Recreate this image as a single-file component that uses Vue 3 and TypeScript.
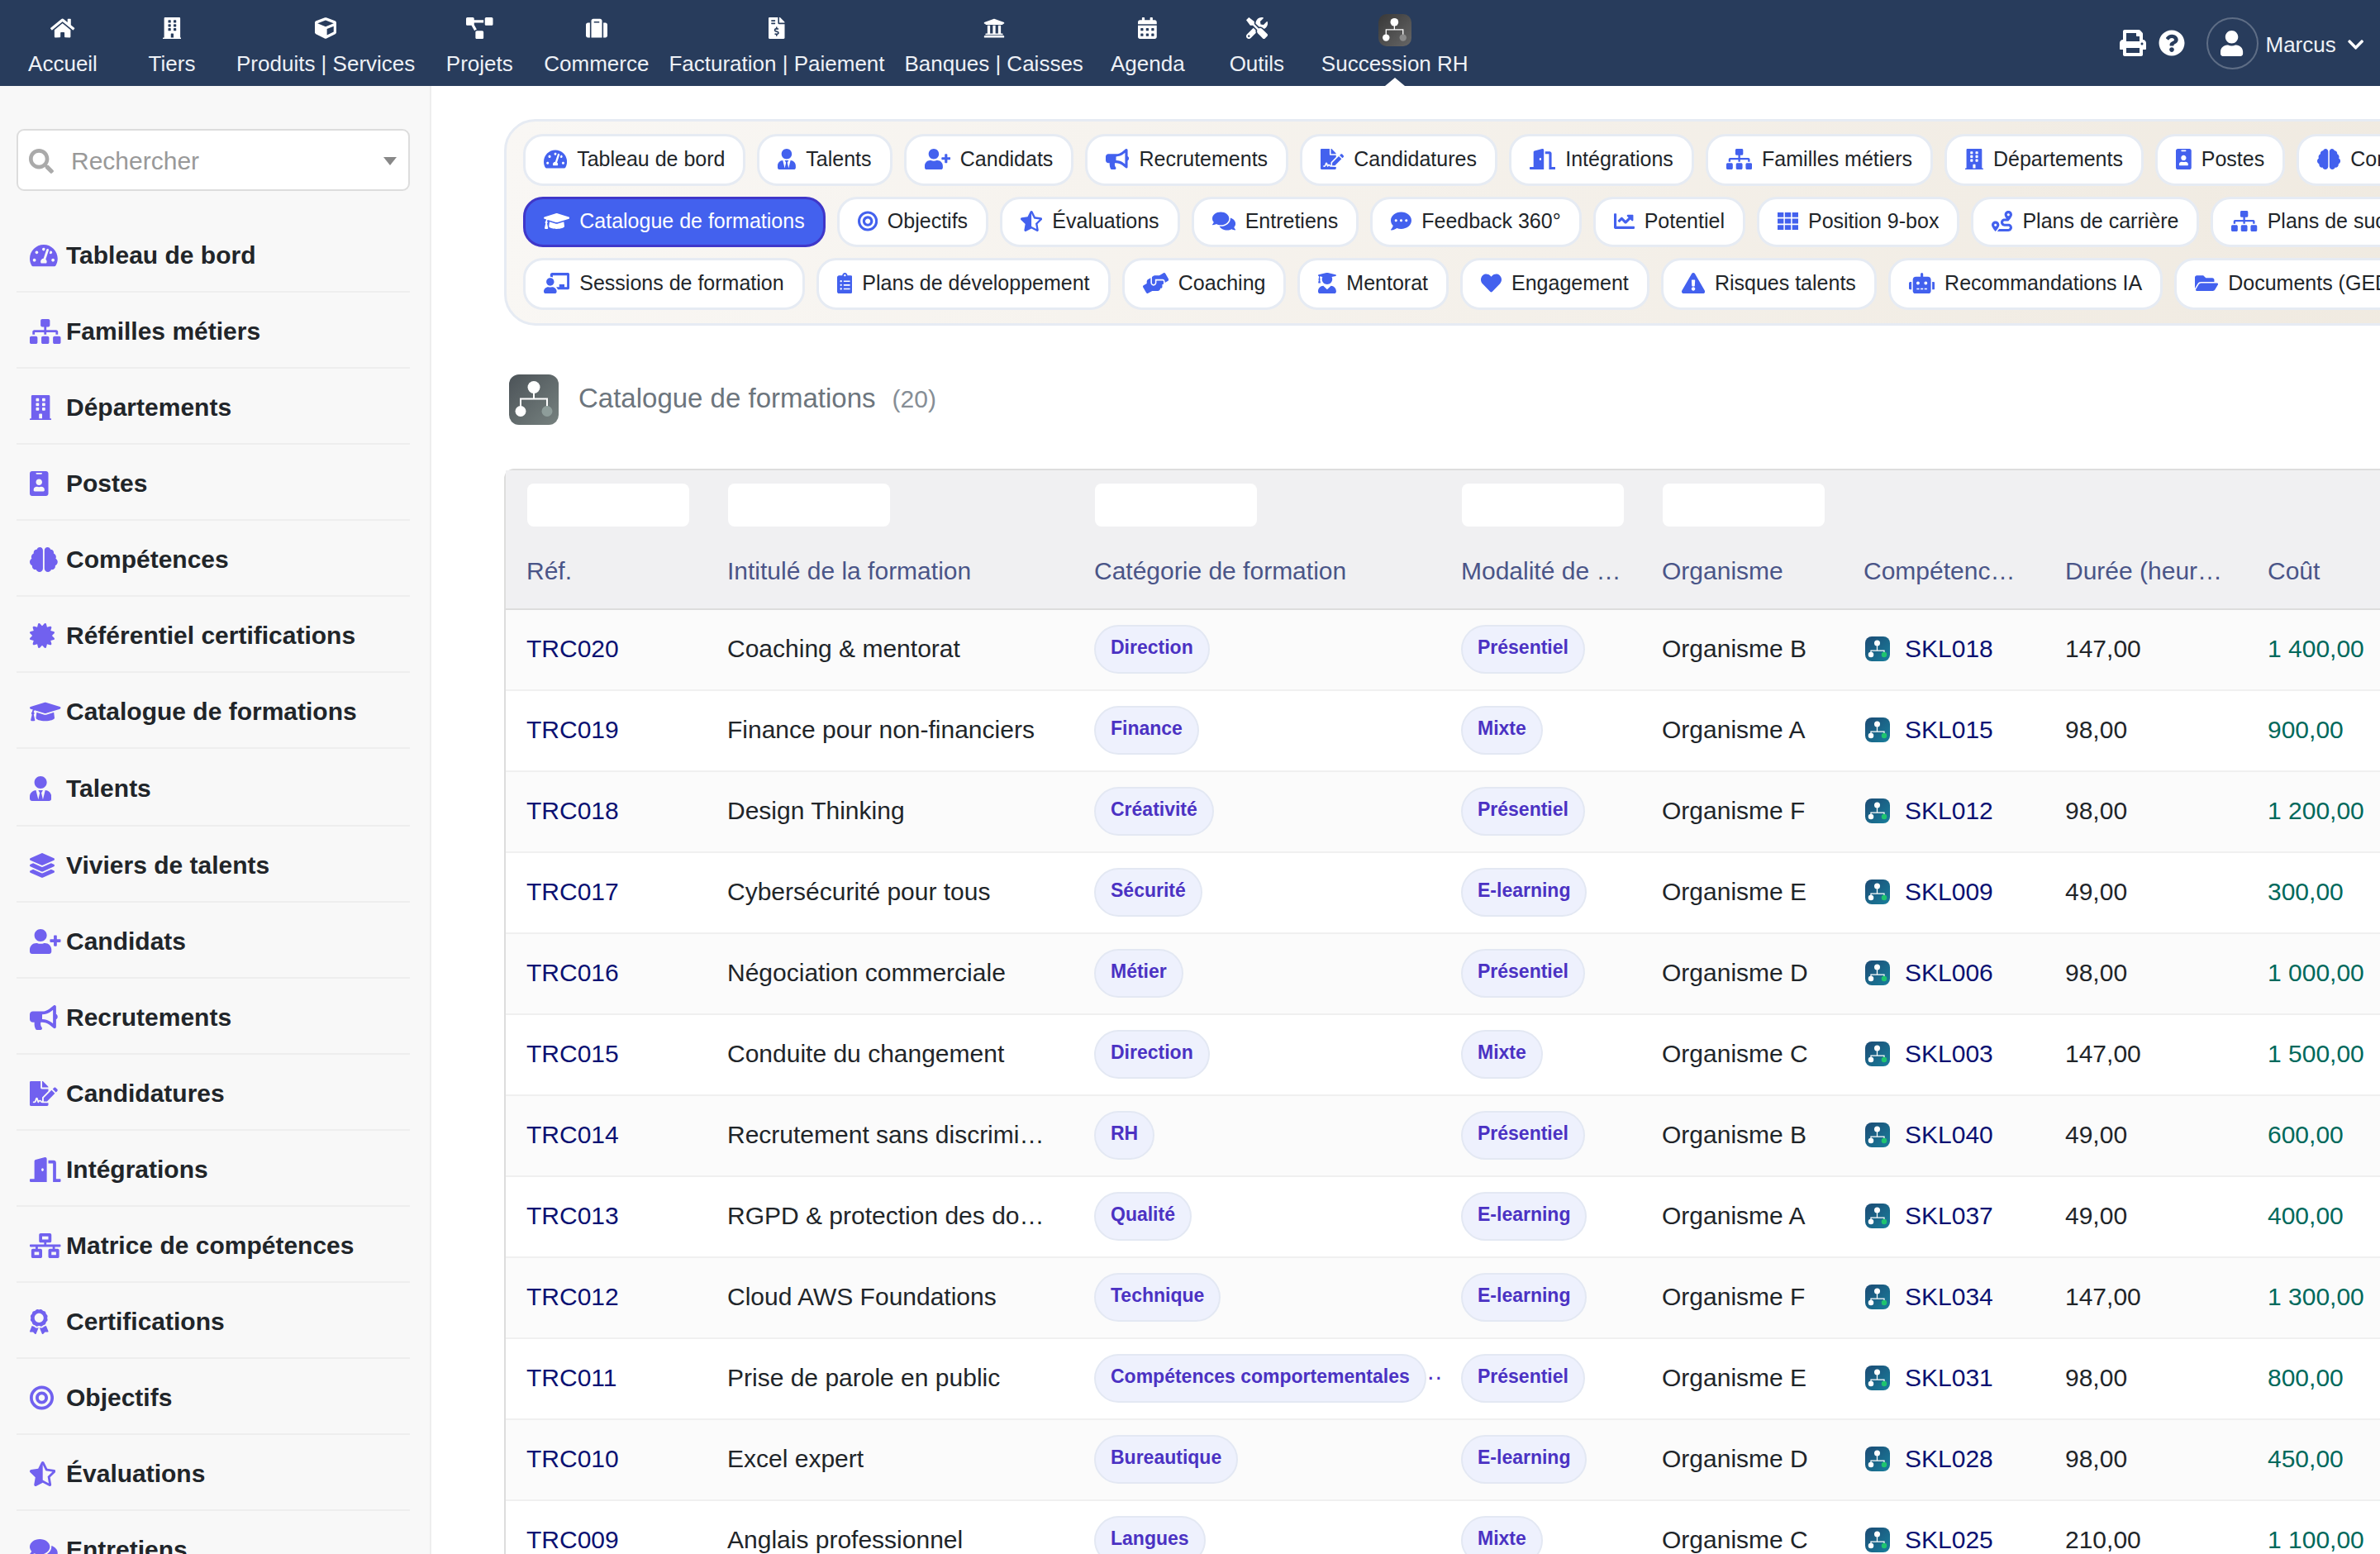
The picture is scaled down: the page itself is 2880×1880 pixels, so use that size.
<template>
  <div class="app">
    <header class="topbar">
      <nav class="nav">
        <div v-for="item in navItems" :key="item.label" class="nav-item">
          <Ico :name="item.icon" class="nav-ico" />
          <span class="nav-label">{{ item.label }}</span>
        </div>
        <div class="nav-item nav-active">
          <span class="logo logo-nav">
            <svg viewBox="0 0 60 60" class="tree">
              <circle cx="29" cy="15" r="7.5" fill="#fff" />
              <path d="M29 20v9M13.5 40V29H45v11" fill="none" stroke="#fff" stroke-width="2" />
              <circle cx="13.5" cy="44" r="6.5" fill="#fff" />
              <circle cx="45" cy="44" r="6.5" fill="#8a8a8a" />
            </svg>
          </span>
          <span class="nav-label nav-label-logo">Succession RH</span>
        </div>
      </nav>
      <div class="nav-right">
        <Ico name="print" class="tool-ico" />
        <Ico name="question" class="tool-ico" />
        <span class="avatar"><Ico name="user" class="avatar-ico" /></span>
        <span class="user-name">Marcus</span>
        <Ico name="chevron" class="chevron" />
      </div>
    </header>

    <div class="body">
      <aside class="sidebar">
        <div class="search">
          <Ico name="search" class="search-ico" />
          <span class="search-text">Rechercher</span>
          <span class="search-arrow"></span>
        </div>
        <ul class="side-list">
          <li v-for="item in sideItems" :key="item.label" class="side-item">
            <span class="side-ico"><Ico :name="item.icon" /></span>
            <span>{{ item.label }}</span>
          </li>
        </ul>
      </aside>

      <main class="main">
        <section class="tabs">
          <div v-for="(row, i) in tabRows" :key="i" class="tab-row">
            <div v-for="tab in row" :key="tab.label" class="tab" :class="{ active: tab.active }">
              <Ico :name="tab.icon" class="tab-ico" />
              <span>{{ tab.label }}</span>
            </div>
          </div>
        </section>

        <div class="page-title">
          <span class="logo logo-title">
            <svg viewBox="0 0 60 60" class="tree">
              <circle cx="30" cy="15" r="7.5" fill="#fff" />
              <path d="M30 20v9M14 40V29h32v11" fill="none" stroke="#fff" stroke-width="2" />
              <circle cx="14" cy="44" r="6.5" fill="#fff" />
              <circle cx="46" cy="44" r="6.5" fill="#8e9d9a" />
            </svg>
          </span>
          <span class="title-text">Catalogue de formations</span>
          <span class="title-count">(20)</span>
        </div>

        <section class="table">
          <div class="thead">
            <div class="grid filters">
              <div v-for="n in 5" :key="n" class="cell"><span class="filter"></span></div>
            </div>
            <div class="grid labels">
              <div v-for="col in columns" :key="col" class="cell">{{ col }}</div>
            </div>
          </div>
          <div v-for="row in rows" :key="row.ref" class="grid row">
            <div class="cell ref">{{ row.ref }}</div>
            <div class="cell">{{ row.title }}</div>
            <div class="cell">
              <span class="badge">{{ row.cat }}</span><span v-if="row.cat.length > 20" class="more">··</span>
            </div>
            <div class="cell"><span class="badge">{{ row.mode }}</span></div>
            <div class="cell">{{ row.org }}</div>
            <div class="cell skill">
              <span class="logo logo-skill">
                <svg viewBox="0 0 60 60" class="tree">
                  <circle cx="29" cy="16" r="7" fill="#fff" />
                  <path d="M29 20v14M14 42V34h32v8" fill="none" stroke="#fff" stroke-width="2.5" />
                  <circle cx="14" cy="44" r="6.5" fill="#fff" />
                  <circle cx="46" cy="44" r="6.5" fill="#1fc46f" />
                </svg>
              </span>
              <span class="ref">{{ row.skill }}</span>
            </div>
            <div class="cell">{{ row.hours }}</div>
            <div class="cell cost">{{ row.cost }}</div>
          </div>
        </section>
      </main>
    </div>
  </div>
</template>

<script setup lang="ts">
import { h } from 'vue'

const icons: Record<string, [number, string]> = {
  home: [576, 'M280.37 148.26L96 300.11V464a16 16 0 0 0 16 16l112.06-.29a16 16 0 0 0 15.92-16V368a16 16 0 0 1 16-16h64a16 16 0 0 1 16 16v95.64a16 16 0 0 0 16 16.05L464 480a16 16 0 0 0 16-16V300L295.67 148.26a12.19 12.19 0 0 0-15.3 0zM571.6 251.47L488 182.56V44.05a12 12 0 0 0-12-12h-56a12 12 0 0 0-12 12v72.61L318.47 43a48 48 0 0 0-61 0L4.34 251.47a12 12 0 0 0-1.6 16.9l25.5 31A12 12 0 0 0 45.15 301l235.22-193.74a12.19 12.19 0 0 1 15.3 0L530.9 301a12 12 0 0 0 16.9-1.6l25.5-31a12 12 0 0 0-1.7-16.93z'],
  user: [448, 'M224 256c70.7 0 128-57.3 128-128S294.7 0 224 0 96 57.3 96 128s57.3 128 128 128zm89.6 32h-16.7c-22.2 10.2-46.9 16-72.9 16s-50.6-5.8-72.9-16h-16.7C60.2 288 0 348.2 0 422.4V464c0 26.5 21.5 48 48 48h352c26.5 0 48-21.5 48-48v-41.6c0-74.2-60.2-134.4-134.4-134.4z'],
  building: [448, 'M436 480h-20V24c0-13.255-10.745-24-24-24H56C42.745 0 32 10.745 32 24v456H12c-6.627 0-12 5.373-12 12v20h448v-20c0-6.627-5.373-12-12-12zM128 76c0-6.627 5.373-12 12-12h40c6.627 0 12 5.373 12 12v40c0 6.627-5.373 12-12 12h-40c-6.627 0-12-5.373-12-12V76zm0 96c0-6.627 5.373-12 12-12h40c6.627 0 12 5.373 12 12v40c0 6.627-5.373 12-12 12h-40c-6.627 0-12-5.373-12-12v-40zm52 148h-40c-6.627 0-12-5.373-12-12v-40c0-6.627 5.373-12 12-12h40c6.627 0 12 5.373 12 12v40c0 6.627-5.373 12-12 12zm76 160h-64v-84c0-6.627 5.373-12 12-12h40c6.627 0 12 5.373 12 12v84zm64-172c0 6.627-5.373 12-12 12h-40c-6.627 0-12-5.373-12-12v-40c0-6.627 5.373-12 12-12h40c6.627 0 12 5.373 12 12v40zm0-96c0 6.627-5.373 12-12 12h-40c-6.627 0-12-5.373-12-12v-40c0-6.627 5.373-12 12-12h40c6.627 0 12 5.373 12 12v40zm0-96c0 6.627-5.373 12-12 12h-40c-6.627 0-12-5.373-12-12V76c0-6.627 5.373-12 12-12h40c6.627 0 12 5.373 12 12v40z'],
  cube: [512, 'M239.1 6.3l-208 78c-18.7 7-31.1 25-31.1 45v225.1c0 18.2 10.3 34.8 26.5 42.9l208 104c13.5 6.8 29.4 6.8 42.9 0l208-104c16.3-8.1 26.5-24.8 26.5-42.9V129.3c0-20-12.4-37.9-31.1-44.9l-208-78C262 2.2 250 2.2 239.1 6.3zM256 68.4l192 72v1.1l-192 78-192-78v-1.1l192-72zm32 356V275.5l160-65v133.9l-160 80z'],
  diagram: [640, 'M384 320H256c-17.67 0-32 14.33-32 32v128c0 17.67 14.33 32 32 32h128c17.67 0 32-14.33 32-32V352c0-17.67-14.33-32-32-32zM192 32c0-17.67-14.33-32-32-32H32C14.33 0 0 14.33 0 32v128c0 17.67 14.33 32 32 32h95.72l73.16 128.04C211.98 300.98 232.4 288 256 288h.28L192 175.51V128h224V64H192V32zM608 0H480c-17.67 0-32 14.33-32 32v128c0 17.67 14.33 32 32 32h128c17.67 0 32-14.33 32-32V32c0-17.67-14.33-32-32-32z'],
  suitcase: [512, 'M128 480h256V80c0-26.5-21.5-48-48-48H176c-26.5 0-48 21.5-48 48v400zm64-384h128v32H192V96zm320 80v256c0 26.5-21.5 48-48 48h-48V128h48c26.5 0 48 21.5 48 48zM96 480H48c-26.5 0-48-21.5-48-48V176c0-26.5 21.5-48 48-48h48v352z'],
  invoice: [384, 'M377 105L279.1 7c-4.5-4.5-10.6-7-17-7H256v128h128v-6.1c0-6.3-2.5-12.4-7-16.9zm-153 31V0H24C10.7 0 0 10.7 0 24v464c0 13.3 10.7 24 24 24h336c13.3 0 24-10.7 24-24V160H248c-13.2 0-24-10.8-24-24zM64 72c0-4.42 3.58-8 8-8h80c4.42 0 8 3.58 8 8v16c0 4.42-3.58 8-8 8H72c-4.42 0-8-3.58-8-8V72zm0 80v-16c0-4.42 3.58-8 8-8h80c4.42 0 8 3.58 8 8v16c0 4.42-3.58 8-8 8H72c-4.42 0-8-3.58-8-8zm144 263.88V440c0 4.42-3.58 8-8 8h-16c-4.42 0-8-3.58-8-8v-24.29c-11.29-.58-22.27-4.52-31.37-11.35-3.9-2.93-4.1-8.77-.57-12.14l11.75-11.21c2.77-2.64 6.89-2.76 10.13-.73 3.87 2.42 8.26 3.72 12.82 3.72h28.11c6.5 0 11.8-5.92 11.8-13.19 0-5.95-3.61-11.19-8.77-12.73l-45-13.5c-18.59-5.58-31.58-23.42-31.58-43.39 0-24.52 19.05-44.44 42.67-45.07V232c0-4.42 3.58-8 8-8h16c4.42 0 8 3.58 8 8v24.29c11.29.58 22.27 4.51 31.37 11.35 3.9 2.93 4.1 8.77.57 12.14l-11.75 11.21c-2.77 2.64-6.89 2.76-10.13.73-3.87-2.43-8.26-3.72-12.82-3.72h-28.11c-6.5 0-11.8 5.92-11.8 13.19 0 5.95 3.61 11.19 8.77 12.73l45 13.5c18.59 5.58 31.58 23.42 31.58 43.39 0 24.53-19.05 44.44-42.67 45.07z'],
  university: [512, 'M496 128v16a8 8 0 0 1-8 8h-24v12c0 6.627-5.373 12-12 12H60c-6.627 0-12-5.373-12-12v-12H24a8 8 0 0 1-8-8v-16a8 8 0 0 1 4.941-7.392l232-88a7.996 7.996 0 0 1 6.118 0l232 88A8 8 0 0 1 496 128zm-24 304H40c-13.255 0-24 10.745-24 24v16a8 8 0 0 0 8 8h464a8 8 0 0 0 8-8v-16c0-13.255-10.745-24-24-24zM96 192v192H60c-6.627 0-12 5.373-12 12v20h416v-20c0-6.627-5.373-12-12-12h-36V192h-64v192h-64V192h-64v192h-64V192H96z'],
  calendar: [448, 'M0 464c0 26.5 21.5 48 48 48h352c26.5 0 48-21.5 48-48V192H0v272zm320-196c0-6.6 5.4-12 12-12h40c6.6 0 12 5.4 12 12v40c0 6.6-5.4 12-12 12h-40c-6.6 0-12-5.4-12-12v-40zm0 128c0-6.6 5.4-12 12-12h40c6.6 0 12 5.4 12 12v40c0 6.6-5.4 12-12 12h-40c-6.6 0-12-5.4-12-12v-40zM192 268c0-6.6 5.4-12 12-12h40c6.6 0 12 5.4 12 12v40c0 6.6-5.4 12-12 12h-40c-6.6 0-12-5.4-12-12v-40zm0 128c0-6.6 5.4-12 12-12h40c6.6 0 12 5.4 12 12v40c0 6.6-5.4 12-12 12h-40c-6.6 0-12-5.4-12-12v-40zM64 268c0-6.6 5.4-12 12-12h40c6.6 0 12 5.4 12 12v40c0 6.6-5.4 12-12 12H76c-6.6 0-12-5.4-12-12v-40zm0 128c0-6.6 5.4-12 12-12h40c6.6 0 12 5.4 12 12v40c0 6.6-5.4 12-12 12H76c-6.6 0-12-5.4-12-12v-40zM400 64h-48V16c0-8.8-7.2-16-16-16h-32c-8.8 0-16 7.2-16 16v48H160V16c0-8.8-7.2-16-16-16h-32c-8.8 0-16 7.2-16 16v48H48C21.5 64 0 85.5 0 112v48h448v-48c0-26.5-21.5-48-48-48z'],
  tools: [512, 'M501.1 395.7L384 278.6c-23.1-23.1-57.6-27.6-85.4-13.9L192 158.1V96L64 0 0 64l96 128h62.1l106.6 106.6c-13.6 27.8-9.2 62.3 13.9 85.4l117.1 117.1c14.6 14.6 38.2 14.6 52.7 0l52.7-52.7c14.5-14.6 14.5-38.2 0-52.7zM331.7 225c28.3 0 54.9 11 74.9 31l19.4 19.4c15.8-6.9 30.8-16.5 43.8-29.5 37.1-37.1 49.7-89.3 37.9-136.7-2.2-9-13.5-12.1-20.1-5.5l-74.4 74.4-67.9-11.3L334 98.9l74.4-74.4c6.6-6.6 3.4-17.9-5.7-20.2-47.4-11.7-99.6.9-136.6 37.9-28.5 28.5-41.9 66.1-41.2 103.6l82.1 82.1c8.1-1.9 16.5-2.9 24.7-2.9zm-103.9 82l-56.7-56.7L18.7 402.8c-25 25-25 65.5 0 90.5s65.5 25 90.5 0l123.6-123.6c-7.6-19.9-9.9-41.6-5-62.7zM64 472c-13.2 0-24-10.8-24-24 0-13.3 10.7-24 24-24s24 10.7 24 24c0 13.2-10.7 24-24 24z'],
  print: [512, 'M448 192V77.25c0-8.49-3.37-16.62-9.37-22.63L393.37 9.37c-6-6-14.14-9.37-22.63-9.37H96C78.33 0 64 14.33 64 32v160c-35.35 0-64 28.65-64 64v112c0 8.84 7.16 16 16 16h48v96c0 17.67 14.33 32 32 32h320c17.67 0 32-14.33 32-32v-96h48c8.84 0 16-7.16 16-16V256c0-35.35-28.65-64-64-64zm-64 256H128v-96h256v96zm0-224H128V64h192v48c0 8.84 7.16 16 16 16h48v96zm48 72c-13.25 0-24-10.75-24-24 0-13.26 10.75-24 24-24s24 10.74 24 24c0 13.25-10.75 24-24 24z'],
  question: [512, 'M504 256c0 136.997-111.043 248-248 248S8 392.997 8 256C8 119.083 119.043 8 256 8s248 111.083 248 248zM262.655 90c-54.497 0-89.255 22.957-116.549 63.758-3.536 5.286-2.353 12.415 2.715 16.258l34.699 26.31c5.205 3.947 12.621 3.008 16.665-2.122 17.864-22.658 30.113-35.797 57.303-35.797 20.429 0 45.698 13.148 45.698 32.958 0 14.976-12.363 22.667-32.534 33.976C247.128 238.528 216 254.941 216 296v4c0 6.627 5.373 12 12 12h56c6.627 0 12-5.373 12-12v-1.333c0-28.462 83.186-29.647 83.186-106.667 0-58.002-60.165-102-116.531-102zM256 338c-25.365 0-46 20.635-46 46 0 25.364 20.635 46 46 46s46-20.636 46-46c0-25.365-20.635-46-46-46z'],
  chevron: [448, 'M207.029 381.476L12.686 187.132c-9.373-9.373-9.373-24.569 0-33.941l22.667-22.667c9.357-9.357 24.522-9.375 33.901-.04L224 284.505l154.745-154.021c9.379-9.335 24.544-9.317 33.901.04l22.667 22.667c9.373 9.373 9.373 24.569 0 33.941L240.971 381.476c-9.373 9.372-24.569 9.372-33.942 0z'],
  search: [512, 'M505 442.7L405.3 343c-4.5-4.5-10.6-7-17-7H372c27.6-35.3 44-79.7 44-128C416 93.1 322.9 0 208 0S0 93.1 0 208s93.1 208 208 208c48.3 0 92.7-16.4 128-44v16.3c0 6.4 2.5 12.5 7 17l99.7 99.7c9.4 9.4 24.6 9.4 33.9 0l28.3-28.3c9.4-9.4 9.4-24.6.1-34zM208 336c-70.7 0-128-57.2-128-128 0-70.7 57.2-128 128-128 70.7 0 128 57.2 128 128 0 70.7-57.2 128-128 128z'],
  gauge: [576, 'M288 32C128.94 32 0 160.94 0 320c0 52.8 14.25 102.26 39.06 144.8 5.61 9.62 16.3 15.2 27.44 15.2h443c11.14 0 21.83-5.58 27.44-15.2C561.75 422.26 576 372.8 576 320c0-159.06-128.94-288-288-288zm0 64c14.71 0 26.58 10.13 30.32 23.65-1.11 2.26-2.64 4.23-3.45 6.67l-9.22 27.67c-5.13 3.49-10.97 6.01-17.64 6.01-17.67 0-32-14.33-32-32S270.33 96 288 96zM96 384c-17.67 0-32-14.33-32-32s14.33-32 32-32 32 14.33 32 32-14.33 32-32 32zm48-160c-17.67 0-32-14.33-32-32s14.33-32 32-32 32 14.33 32 32-14.33 32-32 32zm246.77-72.41l-61.33 184C343.13 347.33 352 364.54 352 384c0 11.72-3.38 22.55-8.88 32H232.88c-5.5-9.45-8.88-20.28-8.88-32 0-33.94 26.5-61.43 59.9-63.59l61.34-184.01c4.17-12.56 17.73-19.45 30.36-15.17 12.57 4.19 19.35 17.79 15.17 30.36zm14.66 57.2l15.52-46.55c3.47-1.29 7.13-2.23 11.05-2.23 17.67 0 32 14.33 32 32s-14.33 32-32 32c-11.38-.01-21-6.28-26.57-15.22zM480 384c-17.67 0-32-14.33-32-32s14.33-32 32-32 32 14.33 32 32-14.33 32-32 32z'],
  userTie: [448, 'M224 256c70.7 0 128-57.3 128-128S294.7 0 224 0 96 57.3 96 128s57.3 128 128 128zm95.8 32.6L272 480l-32-136 32-56h-96l32 56-32 136-47.8-191.4C56.9 292 0 350.3 0 422.4V464c0 26.5 21.5 48 48 48h352c26.5 0 48-21.5 48-48v-41.6c0-72.1-56.9-130.4-128.2-133.8z'],
  userPlus: [640, 'M624 208h-64v-64c0-8.8-7.2-16-16-16h-32c-8.8 0-16 7.2-16 16v64h-64c-8.8 0-16 7.2-16 16v32c0 8.8 7.2 16 16 16h64v64c0 8.8 7.2 16 16 16h32c8.8 0 16-7.2 16-16v-64h64c8.8 0 16-7.2 16-16v-32c0-8.8-7.2-16-16-16zm-400 48c70.7 0 128-57.3 128-128S294.7 0 224 0 96 57.3 96 128s57.3 128 128 128zm89.6 32h-16.7c-22.2 10.2-46.9 16-72.9 16s-50.6-5.8-72.9-16h-16.7C60.2 288 0 348.2 0 422.4V464c0 26.5 21.5 48 48 48h352c26.5 0 48-21.5 48-48v-41.6c0-74.2-60.2-134.4-134.4-134.4z'],
  bullhorn: [576, 'M576 240c0-23.63-12.95-44.04-32-55.12V32.01C544 23.26 537.02 0 512 0c-7.12 0-14.19 2.38-19.98 7.02l-85.03 68.03C364.28 109.19 310.66 128 256 128H64c-35.35 0-64 28.65-64 64v96c0 35.35 28.65 64 64 64h33.7c-1.39 10.48-2.18 21.14-2.18 32 0 39.77 9.26 77.35 25.56 110.94 5.19 10.69 16.52 17.06 28.4 17.06h74.28c26.05 0 41.69-29.84 25.9-50.56-16.4-21.52-26.15-48.36-26.15-77.44 0-11.11 1.62-21.79 4.41-32H256c54.66 0 108.28 18.81 150.98 52.95l85.03 68.03a32.023 32.023 0 0 0 19.98 7.02c24.92 0 32-22.78 32-32V295.13C563.05 284.04 576 263.63 576 240zm-96 141.42l-33.05-26.44C392.95 311.78 325.12 288 256 288v-96c69.12 0 136.95-23.78 190.95-66.98L480 98.58v282.84z'],
  signature: [576, 'M218.17 424.14c-2.95-5.92-8.09-6.52-10.17-6.52s-7.22.59-10.02 6.19l-7.67 15.34c-6.37 12.78-25.03 11.37-29.48-2.09L144 386.59l-10.61 31.88c-5.89 17.66-22.38 29.53-41 29.53H80c-8.84 0-16-7.16-16-16s7.16-16 16-16h12.39c4.83 0 9.11-3.08 10.64-7.66l18.19-54.64c3.3-9.81 12.44-16.41 22.78-16.41s19.48 6.59 22.77 16.41l13.88 41.64c19.75-16.19 54.06-9.7 66 14.16 1.89 3.78 5.49 5.95 9.36 6.26v-82.12l128-127.09V160H248c-13.2 0-24-10.8-24-24V0H24C10.7 0 0 10.7 0 24v464c0 13.3 10.7 24 24 24h336c13.3 0 24-10.7 24-24v-40l-128-.25c-16.12-.03-30.72-9.02-37.83-23.61zM384 121.9c0-6.3-2.5-12.4-7-16.9L279.1 7c-4.5-4.5-10.6-7-17-7H256v128h128v-6.1zm-96 225.06V416h68.99l161.68-162.78-67.88-67.88L288 346.96zm280.54-179.63l-31.87-31.87c-9.94-9.94-26.07-9.94-36.01 0l-27.25 27.25 67.88 67.88 27.25-27.25c9.95-9.94 9.95-26.07 0-36.01z'],
  door: [640, 'M624 448h-80V113.45C544 86.19 522.47 64 496 64H384v64h96v384h144c8.84 0 16-7.16 16-16v-32c0-8.84-7.16-16-16-16zM312.24 1.01l-192 49.74C105.99 54.44 96 67.7 96 82.92V448H16c-8.84 0-16 7.16-16 16v32c0 8.84 7.16 16 16 16h336V33.18c0-21.58-19.56-37.41-39.76-32.17zM264 288c-13.25 0-24-14.33-24-32s10.75-32 24-32 24 14.33 24 32-10.75 32-24 32z'],
  sitemap: [640, 'M128 352H32c-17.67 0-32 14.33-32 32v96c0 17.67 14.33 32 32 32h96c17.67 0 32-14.33 32-32v-96c0-17.67-14.33-32-32-32zm-24-80h192v48h48v-48h192v48h48v-57.59c0-21.17-17.23-38.41-38.41-38.41H344v-64h40c17.67 0 32-14.33 32-32V32c0-17.67-14.33-32-32-32H256c-17.67 0-32 14.33-32 32v96c0 17.67 14.33 32 32 32h40v64H94.41C73.23 224 56 241.23 56 262.41V320h48v-48zm264 80h-96c-17.67 0-32 14.33-32 32v96c0 17.67 14.33 32 32 32h96c17.67 0 32-14.33 32-32v-96c0-17.67-14.33-32-32-32zm240 0h-96c-17.67 0-32 14.33-32 32v96c0 17.67 14.33 32 32 32h96c17.67 0 32-14.33 32-32v-96c0-17.67-14.33-32-32-32z'],
  badgeId: [384, 'M336 0H48C21.5 0 0 21.5 0 48v416c0 26.5 21.5 48 48 48h288c26.5 0 48-21.5 48-48V48c0-26.5-21.5-48-48-48zM144 32h96c8.8 0 16 7.2 16 16s-7.2 16-16 16h-96c-8.8 0-16-7.2-16-16s7.2-16 16-16zm48 128c35.3 0 64 28.7 64 64s-28.7 64-64 64-64-28.7-64-64 28.7-64 64-64zm112 236.8c0 10.6-10 19.2-22.4 19.2H102.4C90 416 80 407.4 80 396.8v-19.2c0-31.8 30.1-57.6 67.2-57.6h5c12.3 5.1 25.7 8 39.8 8s27.6-2.9 39.8-8h5c37.1 0 67.2 25.8 67.2 57.6v19.2z'],
  brain: [576, 'M208 0c-29.9 0-54.7 20.5-61.8 48.2-.8 0-1.4-.2-2.2-.2-35.3 0-64 28.7-64 64 0 4.8.6 9.5 1.7 14C52.5 138 32 166.6 32 200c0 12.6 3.2 24.3 8.3 34.9C16.3 248.7 0 274.3 0 304c0 33.3 20.4 61.9 49.4 73.9-.9 4.6-1.4 9.3-1.4 14.1 0 39.8 32.2 72 72 72 4.1 0 8.1-.5 12-1.2 9.6 28.5 36.2 49.2 68 49.2 39.8 0 72-32.2 72-72V64c0-35.3-28.7-64-64-64zm368 304c0-29.7-16.3-55.3-40.3-69.1 5.2-10.6 8.3-22.3 8.3-34.9 0-33.4-20.5-62-49.7-74 1-4.5 1.7-9.2 1.7-14 0-35.3-28.7-64-64-64-.8 0-1.5.2-2.2.2C422.7 20.5 397.9 0 368 0c-35.3 0-64 28.6-64 64v376c0 39.8 32.2 72 72 72 31.8 0 58.4-20.7 68-49.2 3.9.7 7.9 1.2 12 1.2 39.8 0 72-32.2 72-72 0-4.8-.5-9.5-1.4-14.1 29-12 49.4-40.6 49.4-73.9z'],
  certificate: [512, 'M458.622 255.92l45.985-45.005c13.708-12.977 7.316-36.039-10.664-40.339l-62.65-15.99 17.661-62.015c4.991-17.838-11.829-34.663-29.661-29.671l-61.994 17.667-15.984-62.671C337.085.197 313.765-6.276 300.99 7.228L256 53.57 211.011 7.229c-12.63-13.351-36.047-7.234-40.325 10.668l-15.984 62.671-61.995-17.667C74.87 57.907 58.056 74.738 63.046 92.572l17.661 62.015-62.65 15.99C.069 174.878-6.31 197.944 7.392 210.915l45.985 45.005-45.985 45.004c-13.708 12.977-7.316 36.039 10.664 40.339l62.65 15.99-17.661 62.015c-4.991 17.838 11.829 34.663 29.661 29.671l61.994-17.667 15.984 62.671c4.439 18.575 27.696 24.018 40.325 10.668L256 458.61l44.989 46.001c12.5 13.488 35.987 7.486 40.325-10.668l15.984-62.671 61.994 17.667c17.836 4.994 34.651-11.837 29.661-29.671l-17.661-62.015 62.65-15.99c17.987-4.302 24.366-27.367 10.664-40.339l-45.984-45.004z'],
  cap: [640, 'M622.34 153.2L343.4 67.5c-15.2-4.67-31.6-4.67-46.79 0L17.66 153.2c-23.54 7.23-23.54 38.36 0 45.59l48.63 14.94c-10.67 13.19-17.23 29.28-17.88 46.9C38.78 266.15 32 276.11 32 288c0 10.78 5.68 19.85 13.86 25.65L20.33 428.53C18.11 438.52 25.71 448 35.94 448h56.11c10.24 0 17.84-9.48 15.62-19.47L82.14 313.65C90.32 307.85 96 298.78 96 288c0-11.57-6.47-21.25-15.66-26.87.76-15.02 8.44-28.3 20.69-36.72L296.6 284.5c9.06 2.78 26.44 6.25 46.79 0l278.95-85.7c23.55-7.24 23.55-38.36 0-45.6zM352.79 315.09c-28.53 8.76-52.84 3.92-65.59 0l-145.02-44.55L128 384c0 35.35 85.96 64 192 64s192-28.65 192-64l-14.18-113.47-145.03 44.56z'],
  layers: [512, 'M12.41 148.02l232.94 105.67c6.8 3.09 14.49 3.09 21.29 0l232.94-105.67c16.55-7.51 16.55-32.52 0-40.03L266.65 2.31a25.607 25.607 0 0 0-21.29 0L12.41 107.98c-16.55 7.51-16.55 32.53 0 40.04zm487.18 88.28l-58.09-26.33-161.64 73.27c-7.56 3.43-15.59 5.17-23.86 5.17s-16.29-1.74-23.86-5.17L70.51 209.97l-58.1 26.33c-16.55 7.5-16.55 32.5 0 40l232.94 105.59c6.8 3.08 14.49 3.08 21.29 0L499.59 276.3c16.55-7.5 16.55-32.5 0-40zm0 127.8l-57.87-26.23-161.86 73.37c-7.56 3.43-15.59 5.17-23.86 5.17s-16.29-1.74-23.86-5.17L70.29 337.87 12.41 364.1c-16.55 7.5-16.55 32.5 0 40l232.94 105.59c6.8 3.08 14.49 3.08 21.29 0L499.59 404.1c16.55-7.5 16.55-32.5 0-40z'],
  network: [640, 'M640 264v-16c0-8.84-7.16-16-16-16H344v-40h72c17.67 0 32-14.33 32-32V32c0-17.67-14.33-32-32-32H224c-17.67 0-32 14.33-32 32v128c0 17.67 14.33 32 32 32h72v40H16c-8.84 0-16 7.16-16 16v16c0 8.84 7.16 16 16 16h104v40H64c-17.67 0-32 14.33-32 32v128c0 17.67 14.33 32 32 32h160c17.67 0 32-14.33 32-32V352c0-17.67-14.33-32-32-32h-56v-40h304v40h-56c-17.67 0-32 14.33-32 32v128c0 17.67 14.33 32 32 32h160c17.67 0 32-14.33 32-32V352c0-17.67-14.33-32-32-32h-56v-40h104c8.84 0 16-7.16 16-16zM256 128V64h128v64H256zm-64 320H96v-64h96v64zm352 0h-96v-64h96v64z'],
  award: [384, 'M97.12 362.63c-8.69-8.69-4.16-6.24-25.12-11.85-9.51-2.55-17.87-7.45-25.43-13.32L1.2 448.7c-4.39 10.77 3.81 22.47 15.43 22.03l52.69-2.01L105.56 507c8 8.44 22.04 5.81 26.43-4.96l52.05-127.62c-10.84 6.04-22.87 9.58-35.31 9.58-19.5 0-37.82-7.59-51.61-21.37zM382.8 448.7l-45.37-111.24c-7.56 5.88-15.92 10.77-25.43 13.32-21.07 5.64-16.45 3.18-25.12 11.85-13.79 13.78-32.12 21.37-51.62 21.37-12.44 0-24.47-3.55-35.31-9.58L252 502.04c4.39 10.77 18.44 13.4 26.43 4.96l36.25-38.28 52.69 2.01c11.62.44 19.82-11.27 15.43-22.03zM263 340c15.28-15.55 17-14.21 38.79-20.14 13.91-3.79 24.75-14.84 28.47-28.98 7.48-28.4 5.54-24.97 25.95-45.75 10.17-10.35 14.14-25.44 10.42-39.58-7.47-28.38-7.48-24.42 0-52.83 3.72-14.14-.25-29.23-10.42-39.58-20.41-20.78-18.47-17.36-25.95-45.75-3.72-14.14-14.56-25.19-28.47-28.98-27.88-7.61-24.52-5.62-44.95-26.41-10.17-10.35-25-14.4-38.89-10.61-27.87 7.6-23.98 7.61-51.9 0-13.89-3.79-28.72.25-38.89 10.61-20.41 20.78-17.05 18.8-44.94 26.41-13.91 3.79-24.75 14.84-28.47 28.98-7.47 28.39-5.54 24.97-25.95 45.75-10.17 10.35-14.15 25.44-10.42 39.58 7.47 28.36 7.48 24.4 0 52.82-3.72 14.14.25 29.23 10.42 39.59 20.41 20.78 18.47 17.35 25.95 45.75 3.72 14.14 14.56 25.19 28.47 28.98C104.6 325.96 106.27 325 121 340c13.23 13.47 33.84 15.88 49.74 5.82a39.676 39.676 0 0 1 42.53 0c15.89 10.06 36.5 7.65 49.73-5.82zM97.66 175.96c0-53.03 42.24-96.02 94.34-96.02s94.34 42.99 94.34 96.02-42.24 96.02-94.34 96.02-94.34-42.99-94.34-96.02z'],
  bullseye: [496, 'M248 8C111.03 8 0 119.03 0 256s111.03 248 248 248 248-111.03 248-248S384.97 8 248 8zm0 432c-101.69 0-184-82.29-184-184 0-101.69 82.29-184 184-184 101.69 0 184 82.29 184 184 0 101.69-82.29 184-184 184zm0-312c-70.69 0-128 57.31-128 128s57.31 128 128 128 128-57.31 128-128-57.31-128-128-128zm0 192c-35.29 0-64-28.71-64-64s28.71-64 64-64 64 28.71 64 64-28.71 64-64 64z'],
  starHalf: [536, 'M508.55 171.51L362.18 150.2 296.77 17.81C290.89 5.98 279.42 0 267.95 0c-11.4 0-22.79 5.9-28.69 17.81l-65.43 132.38-146.38 21.29c-26.25 3.8-36.77 36.09-17.74 54.59l105.89 103-25.06 145.48C86.98 495.33 103.57 512 122.15 512c4.93 0 10-1.17 14.87-3.75l130.95-68.68 130.94 68.7c4.86 2.55 9.92 3.71 14.83 3.71 18.6 0 35.22-16.61 31.66-37.4l-25.03-145.49 105.91-102.98c19.04-18.5 8.52-50.8-17.73-54.6zm-121.74 123.2l-18.12 17.62 4.28 24.88 19.52 113.45-102.13-53.59-22.38-11.74.03-317.19 51.03 103.29 11.18 22.63 25.01 3.64 114.23 16.63-82.65 80.38z'],
  comments: [576, 'M416 192c0-88.4-93.1-160-208-160S0 103.6 0 192c0 34.3 14.1 65.9 38 92-13.4 30.2-35.5 54.2-35.8 54.5-2.2 2.3-2.8 5.7-1.5 8.7S4.8 352 8 352c36.6 0 66.9-12.3 88.7-25 32.2 15.7 70.3 25 111.3 25 114.9 0 208-71.6 208-160zm122 220c23.9-26 38-57.7 38-92 0-66.9-53.5-124.2-129.3-148.1.9 6.6 1.3 13.3 1.3 20.1 0 105.9-107.7 192-240 192-10.8 0-21.3-.8-31.7-1.9C207.8 439.6 281.8 480 368 480c41 0 79.1-9.2 111.3-25 21.8 12.7 52.1 25 88.7 25 3.2 0 6.1-1.9 7.3-4.8 1.3-2.9.7-6.3-1.5-8.7-.3-.3-22.4-24.2-35.8-54.5z'],
  commentDots: [512, 'M256 32C114.6 32 0 125.1 0 240c0 49.6 21.4 95 57 130.7C44.5 421.1 2.7 466 2.2 466.5c-2.2 2.3-2.8 5.7-1.5 8.7S4.8 480 8 480c66.3 0 116-31.8 140.6-51.4 32.7 12.3 69 19.4 107.4 19.4 141.4 0 256-93.1 256-208S397.4 32 256 32zM128 272c-17.7 0-32-14.3-32-32s14.3-32 32-32 32 14.3 32 32-14.3 32-32 32zm128 0c-17.7 0-32-14.3-32-32s14.3-32 32-32 32 14.3 32 32-14.3 32-32 32zm128 0c-17.7 0-32-14.3-32-32s14.3-32 32-32 32 14.3 32 32-14.3 32-32 32z'],
  chartLine: [512, 'M496 384H64V80c0-8.84-7.16-16-16-16H16C7.16 64 0 71.16 0 80v336c0 17.67 14.33 32 32 32h464c8.84 0 16-7.16 16-16v-32c0-8.84-7.16-16-16-16zM464 96H345.94c-21.38 0-32.09 25.85-16.97 40.97l32.4 32.4L288 242.75l-73.37-73.37c-12.5-12.5-32.76-12.5-45.25 0l-68.69 68.69c-6.25 6.25-6.25 16.38 0 22.63l22.62 22.62c6.25 6.25 16.38 6.25 22.63 0L192 237.25l73.37 73.37c12.5 12.5 32.76 12.5 45.25 0l96-96 32.4 32.4c15.12 15.12 40.97 4.41 40.97-16.97V112c.01-8.84-7.15-16-16-16z'],
  grid: [512, 'M0 40h150v120H0zM181 40h150v120H181zM362 40h150v120H362zM0 196h150v120H0zM181 196h150v120H181zM362 196h150v120H362zM0 352h150v120H0zM181 352h150v120H181zM362 352h150v120H362z'],
  route: [512, 'M416 320h-96c-17.6 0-32-14.4-32-32s14.4-32 32-32h96s96-107 96-160-43-96-96-96-96 43-96 96c0 25.5 22.2 63.4 45.3 96H320c-52.9 0-96 43.1-96 96s43.1 96 96 96h96c17.6 0 32 14.4 32 32s-14.4 32-32 32H185.5c-16 24.8-33.8 47.7-47.3 64H416c52.9 0 96-43.1 96-96s-43.1-96-96-96zm0-256c17.7 0 32 14.3 32 32s-14.3 32-32 32-32-14.3-32-32 14.3-32 32-32zM96 256c-53 0-96 43-96 96s96 160 96 160 96-107 96-160-43-96-96-96zm0 128c-17.7 0-32-14.3-32-32s14.3-32 32-32 32 14.3 32 32-14.3 32-32 32z'],
  teacher: [640, 'M208 352c-2.39 0-4.78.35-7.06 1.09C187.98 357.3 174.35 360 160 360c-14.35 0-27.98-2.7-40.95-6.91-2.28-.74-4.66-1.09-7.05-1.09C49.94 352-.33 402.48 0 464.62.14 490.88 21.73 512 48 512h224c26.27 0 47.86-21.12 48-47.38.33-62.14-49.94-112.62-112-112.62zm-48-32c53.02 0 96-42.98 96-96s-42.98-96-96-96-96 42.98-96 96 42.98 96 96 96zM592 0H208c-26.47 0-48 22.25-48 49.59V96c23.42 0 45.1 6.78 64 17.8V64h352v288h-64v-64H384v64h-76.24c19.1 16.69 33.12 38.73 39.69 64H592c26.47 0 48-22.25 48-49.59V49.59C640 22.25 618.47 0 592 0z'],
  clipboard: [384, 'M336 64h-80c0-35.3-28.7-64-64-64s-64 28.7-64 64H48C21.5 64 0 85.5 0 112v352c0 26.5 21.5 48 48 48h288c26.5 0 48-21.5 48-48V112c0-26.5-21.5-48-48-48zM96 424c-13.3 0-24-10.7-24-24s10.7-24 24-24 24 10.7 24 24-10.7 24-24 24zm0-96c-13.3 0-24-10.7-24-24s10.7-24 24-24 24 10.7 24 24-10.7 24-24 24zm0-96c-13.3 0-24-10.7-24-24s10.7-24 24-24 24 10.7 24 24-10.7 24-24 24zm96-192c13.3 0 24 10.7 24 24s-10.7 24-24 24-24-10.7-24-24 10.7-24 24-24zm128 368c0 4.4-3.6 8-8 8H168c-4.4 0-8-3.6-8-8v-16c0-4.4 3.6-8 8-8h144c4.4 0 8 3.6 8 8v16zm0-96c0 4.4-3.6 8-8 8H168c-4.4 0-8-3.6-8-8v-16c0-4.4 3.6-8 8-8h144c4.4 0 8 3.6 8 8v16zm0-96c0 4.4-3.6 8-8 8H168c-4.4 0-8-3.6-8-8v-16c0-4.4 3.6-8 8-8h144c4.4 0 8 3.6 8 8v16z'],
  hands: [640, 'M488 192H336v56c0 39.7-32.3 72-72 72s-72-32.3-72-72V126.4l-64.9 39C107.8 176.9 96 197.8 96 220.2v47.3l-80 46.2C.7 322.5-4.6 342.1 4.3 357.4l80 138.6c8.8 15.3 28.4 20.5 43.7 11.7L231.4 448H368c35.3 0 64-28.7 64-64h16c17.7 0 32-14.3 32-32v-64h8c13.3 0 24-10.7 24-24v-48c0-13.3-10.7-24-24-24zm147.7-37.4L555.7 16C546.9.7 527.3-4.5 512 4.3L408.6 64H306.4c-12 0-23.7 3.4-34 9.7L238.9 94.6C229.5 100.4 224 110.6 224 121.6V248c0 22.1 17.9 40 40 40s40-17.9 40-40v-88h184c30.9 0 56 25.1 56 56v28.5l80-46.2c15.3-8.9 20.5-28.4 11.7-43.7z'],
  graduate: [448, 'M319.4 320.6L224 416l-95.4-95.4C57.1 323.7 0 382.2 0 454.4v9.6c0 26.5 21.5 48 48 48h352c26.5 0 48-21.5 48-48v-9.6c0-72.2-57.1-130.7-128.6-133.8zM13.6 79.8l6.4 1.5v58.4c-7 4.2-12 11.5-12 20.3 0 8.4 4.6 15.4 11.1 19.7L3.5 242c-1.7 6.9 2.1 14 7.6 14h41.8c5.5 0 9.3-7.1 7.6-14l-15.6-62.3C51.4 175.4 56 168.4 56 160c0-8.8-5-16.1-12-20.3V87.1l66 15.9c-8.6 17.2-14 36.4-14 57 0 70.7 57.3 128 128 128s128-57.3 128-128c0-20.6-5.3-39.8-14-57l96.3-23.2c18.2-4.4 18.2-27.1 0-31.5l-190.4-46c-13-3.1-26.7-3.1-39.7 0L13.6 48.2c-18.1 4.4-18.1 27.2 0 31.6z'],
  heart: [512, 'M462.3 62.6C407.5 15.9 326 24.3 275.7 76.2L256 96.5l-19.7-20.3C186.1 24.3 104.5 15.9 49.7 62.6c-62.8 53.6-66.1 149.8-9.9 207.9l193.5 199.8c12.5 12.9 32.8 12.9 45.3 0l193.5-199.8c56.3-58.1 53-154.3-9.8-207.9z'],
  warning: [576, 'M569.517 440.013C587.975 472.007 564.806 512 527.94 512H48.054c-36.937 0-59.999-40.055-41.577-71.987L246.423 24.005c18.467-32.009 64.72-31.951 83.154 0l239.94 416.008zM288 354c-25.405 0-46 20.595-46 46s20.595 46 46 46 46-20.595 46-46-20.595-46-46-46zm-43.673-165.346l7.418 136c.347 6.364 5.609 11.346 11.982 11.346h48.546c6.373 0 11.635-4.982 11.982-11.346l7.418-136c.375-6.874-5.098-12.654-11.982-12.654h-63.383c-6.884 0-12.356 5.78-11.981 12.654z'],
  robot: [640, 'M32,224H64V416H32A31.96166,31.96166,0,0,1,0,384V256A31.96166,31.96166,0,0,1,32,224Zm512-48V448a64.06328,64.06328,0,0,1-64,64H160a64.06328,64.06328,0,0,1-64-64V176a79.974,79.974,0,0,1,80-80H288V32a32,32,0,0,1,64,0V96H464A79.974,79.974,0,0,1,544,176ZM264,256a40,40,0,1,0-40,40A39.997,39.997,0,0,0,264,256Zm-8,128H192v32h64Zm96,0H288v32h64ZM456,256a40,40,0,1,0-40,40A39.997,39.997,0,0,0,456,256Zm-8,128H384v32h64ZM640,256V384a31.96166,31.96166,0,0,1-32,32H576V224h32A31.96166,31.96166,0,0,1,640,256Z'],
  folder: [576, 'M572.694 292.093L500.27 416.248A63.997 63.997 0 0 1 444.989 448H45.025c-18.523 0-30.064-20.093-20.731-36.093l72.424-124.155A64 64 0 0 1 152 256h399.964c18.523 0 30.064 20.093 20.73 36.093zM152 224h328v-48c0-26.51-21.49-48-48-48H272l-64-64H48C21.49 64 0 85.49 0 112v278.046l69.077-118.418C86.214 242.25 117.989 224 152 224z']
}

// same svg everywhere, the width follows the glyph's own ratio
const Ico = (props: { name: string }) => {
  const [w, d] = icons[props.name]
  return h('svg', {
    viewBox: `0 0 ${w} 512`,
    fill: 'currentColor',
    style: { width: `${w / 512}em`, height: '1em', display: 'block', flexShrink: 0 }
  }, [h('path', { d })])
}
Ico.props = ['name']

const navItems = [
  { label: 'Accueil', icon: 'home' },
  { label: 'Tiers', icon: 'building' },
  { label: 'Produits | Services', icon: 'cube' },
  { label: 'Projets', icon: 'diagram' },
  { label: 'Commerce', icon: 'suitcase' },
  { label: 'Facturation | Paiement', icon: 'invoice' },
  { label: 'Banques | Caisses', icon: 'university' },
  { label: 'Agenda', icon: 'calendar' },
  { label: 'Outils', icon: 'tools' }
]

const sideItems = [
  { label: 'Tableau de bord', icon: 'gauge' },
  { label: 'Familles métiers', icon: 'sitemap' },
  { label: 'Départements', icon: 'building' },
  { label: 'Postes', icon: 'badgeId' },
  { label: 'Compétences', icon: 'brain' },
  { label: 'Référentiel certifications', icon: 'certificate' },
  { label: 'Catalogue de formations', icon: 'cap' },
  { label: 'Talents', icon: 'userTie' },
  { label: 'Viviers de talents', icon: 'layers' },
  { label: 'Candidats', icon: 'userPlus' },
  { label: 'Recrutements', icon: 'bullhorn' },
  { label: 'Candidatures', icon: 'signature' },
  { label: 'Intégrations', icon: 'door' },
  { label: 'Matrice de compétences', icon: 'network' },
  { label: 'Certifications', icon: 'award' },
  { label: 'Objectifs', icon: 'bullseye' },
  { label: 'Évaluations', icon: 'starHalf' },
  { label: 'Entretiens', icon: 'comments' }
]

type Tab = { label: string; icon: string; active?: boolean }

const tabRows: Tab[][] = [
  [
    { label: 'Tableau de bord', icon: 'gauge' },
    { label: 'Talents', icon: 'userTie' },
    { label: 'Candidats', icon: 'userPlus' },
    { label: 'Recrutements', icon: 'bullhorn' },
    { label: 'Candidatures', icon: 'signature' },
    { label: 'Intégrations', icon: 'door' },
    { label: 'Familles métiers', icon: 'sitemap' },
    { label: 'Départements', icon: 'building' },
    { label: 'Postes', icon: 'badgeId' },
    { label: 'Compétences', icon: 'brain' }
  ],
  [
    { label: 'Catalogue de formations', icon: 'cap', active: true },
    { label: 'Objectifs', icon: 'bullseye' },
    { label: 'Évaluations', icon: 'starHalf' },
    { label: 'Entretiens', icon: 'comments' },
    { label: 'Feedback 360°', icon: 'commentDots' },
    { label: 'Potentiel', icon: 'chartLine' },
    { label: 'Position 9-box', icon: 'grid' },
    { label: 'Plans de carrière', icon: 'route' },
    { label: 'Plans de succession', icon: 'sitemap' }
  ],
  [
    { label: 'Sessions de formation', icon: 'teacher' },
    { label: 'Plans de développement', icon: 'clipboard' },
    { label: 'Coaching', icon: 'hands' },
    { label: 'Mentorat', icon: 'graduate' },
    { label: 'Engagement', icon: 'heart' },
    { label: 'Risques talents', icon: 'warning' },
    { label: 'Recommandations IA', icon: 'robot' },
    { label: 'Documents (GED)', icon: 'folder' }
  ]
]

const columns = [
  'Réf.',
  'Intitulé de la formation',
  'Catégorie de formation',
  'Modalité de formation',
  'Organisme',
  'Compétences visées',
  'Durée (heures)',
  'Coût'
]

const rows = [
  { ref: 'TRC020', title: 'Coaching & mentorat', cat: 'Direction', mode: 'Présentiel', org: 'Organisme B', skill: 'SKL018', hours: '147,00', cost: '1 400,00' },
  { ref: 'TRC019', title: 'Finance pour non-financiers', cat: 'Finance', mode: 'Mixte', org: 'Organisme A', skill: 'SKL015', hours: '98,00', cost: '900,00' },
  { ref: 'TRC018', title: 'Design Thinking', cat: 'Créativité', mode: 'Présentiel', org: 'Organisme F', skill: 'SKL012', hours: '98,00', cost: '1 200,00' },
  { ref: 'TRC017', title: 'Cybersécurité pour tous', cat: 'Sécurité', mode: 'E-learning', org: 'Organisme E', skill: 'SKL009', hours: '49,00', cost: '300,00' },
  { ref: 'TRC016', title: 'Négociation commerciale', cat: 'Métier', mode: 'Présentiel', org: 'Organisme D', skill: 'SKL006', hours: '98,00', cost: '1 000,00' },
  { ref: 'TRC015', title: 'Conduite du changement', cat: 'Direction', mode: 'Mixte', org: 'Organisme C', skill: 'SKL003', hours: '147,00', cost: '1 500,00' },
  { ref: 'TRC014', title: 'Recrutement sans discrimination', cat: 'RH', mode: 'Présentiel', org: 'Organisme B', skill: 'SKL040', hours: '49,00', cost: '600,00' },
  { ref: 'TRC013', title: 'RGPD & protection des données', cat: 'Qualité', mode: 'E-learning', org: 'Organisme A', skill: 'SKL037', hours: '49,00', cost: '400,00' },
  { ref: 'TRC012', title: 'Cloud AWS Foundations', cat: 'Technique', mode: 'E-learning', org: 'Organisme F', skill: 'SKL034', hours: '147,00', cost: '1 300,00' },
  { ref: 'TRC011', title: 'Prise de parole en public', cat: 'Compétences comportementales', mode: 'Présentiel', org: 'Organisme E', skill: 'SKL031', hours: '98,00', cost: '800,00' },
  { ref: 'TRC010', title: 'Excel expert', cat: 'Bureautique', mode: 'E-learning', org: 'Organisme D', skill: 'SKL028', hours: '98,00', cost: '450,00' },
  { ref: 'TRC009', title: 'Anglais professionnel', cat: 'Langues', mode: 'Mixte', org: 'Organisme C', skill: 'SKL025', hours: '210,00', cost: '1 100,00' }
]
</script>

<style>
html,
body {
  margin: 0;
  background: #fff;
}
</style>

<style scoped>
.app {
  width: 2880px;
  height: 1880px;
  overflow: hidden;
  font-family: 'Liberation Sans', Arial, sans-serif;
  color: #212529;
}

.topbar {
  height: 104px;
  background: #283c5c;
  display: flex;
  align-items: stretch;
  justify-content: space-between;
  color: #fff;
}

.nav {
  display: flex;
  padding-left: 10px;
}

.nav-item {
  min-width: 108px;
  height: 104px;
  padding: 0 12px;
  display: flex;
  flex-direction: column;
  align-items: center;
  position: relative;
}

.nav-ico {
  font-size: 26px;
  margin-top: 21px;
}

.nav-label {
  margin-top: 14px;
  font-size: 26px;
  line-height: 32px;
  white-space: nowrap;
  color: #eef1f6;
}

.nav-label-logo {
  margin-top: 5px;
}

.nav-active::after {
  content: '';
  position: absolute;
  bottom: 0;
  left: 50%;
  margin-left: -12px;
  border-left: 12px solid transparent;
  border-right: 12px solid transparent;
  border-bottom: 10px solid #fff;
}

.logo {
  display: block;
  flex-shrink: 0;
}

.logo-nav {
  width: 40px;
  height: 39px;
  margin-top: 17px;
  border-radius: 10px;
  background: linear-gradient(135deg, #383838, #666);
}

.logo-title {
  width: 60px;
  height: 61px;
  border-radius: 12px;
  background: linear-gradient(135deg, #4c5358, #76817f);
}

.logo-skill {
  width: 30px;
  height: 30px;
  margin-left: 2px;
  border-radius: 8px;
  background: linear-gradient(135deg, #1c4a74, #197f9c);
}

.tree {
  display: block;
  width: 100%;
  height: 100%;
}

.nav-right {
  display: flex;
  align-items: center;
  padding-right: 20px;
  font-size: 26px;
}

.tool-ico {
  font-size: 32px;
  margin-right: 15px;
}

.avatar {
  width: 63px;
  height: 63px;
  box-sizing: border-box;
  margin-left: 11px;
  border: 2px solid rgba(255, 255, 255, 0.25);
  border-radius: 50%;
  display: flex;
  align-items: center;
  justify-content: center;
}

.avatar-ico {
  font-size: 31px;
}

.user-name {
  margin-left: 9px;
  padding-top: 5px;
  color: #eef1f6;
}

.chevron {
  font-size: 22px;
  margin-left: 14px;
  margin-top: 4px;
}

.body {
  display: flex;
  height: 1776px;
}

.sidebar {
  width: 520px;
  flex-shrink: 0;
  box-sizing: content-box;
  background: #f8f8f8;
  border-right: 2px solid #eee;
  padding: 52px 0 0;
  overflow: hidden;
}

.search {
  margin: 0 24px 0 20px;
  height: 75px;
  box-sizing: border-box;
  background: #fff;
  border: 2px solid #ddd;
  border-radius: 9px;
  display: flex;
  align-items: center;
  padding: 3px 0 0 13px;
  color: #999;
}

.search-ico {
  font-size: 30px;
  color: #aaa;
}

.search-text {
  margin-left: 21px;
  font-size: 30px;
}

.search-arrow {
  margin-left: auto;
  margin-right: 14px;
  border-left: 8px solid transparent;
  border-right: 8px solid transparent;
  border-top: 10px solid #888;
}

.side-list {
  list-style: none;
  margin: 31px 24px 0 20px;
  padding: 0;
}

.side-item {
  height: 92px;
  box-sizing: border-box;
  padding: 3px 0 0 16px;
  border-bottom: 2px solid #eee;
  display: flex;
  align-items: center;
  font-size: 30px;
  font-weight: 700;
  white-space: nowrap;
}

.side-item:nth-child(8) {
  height: 94px;
}

.side-ico {
  width: 44px;
  flex-shrink: 0;
  font-size: 30px;
  color: #7161ef;
}

.main {
  flex: 1;
  min-width: 0;
  overflow: hidden;
  padding: 40px 0 0 88px;
}

.tabs {
  width: 2500px;
  box-sizing: border-box;
  height: 250px;
  padding: 15px 0 0 20px;
  border: 3px solid #e6ebf3;
  border-radius: 38px;
  background: linear-gradient(100deg, #f9f7f4, #efe9df);
  display: flex;
  flex-direction: column;
  gap: 13px;
}

.tab-row {
  display: flex;
  gap: 14px;
}

.tab {
  height: 63px;
  box-sizing: border-box;
  padding: 0 22px 3px;
  background: #fff;
  border: 3px solid #e6ebf3;
  border-radius: 24px;
  display: flex;
  align-items: center;
  gap: 12px;
  font-size: 25px;
  white-space: nowrap;
  color: #212529;
}

.tab-row:nth-child(2) .tab {
  height: 61px;
}

.tab-ico {
  font-size: 25px;
  color: #4361ee;
}

.tab.active {
  background: #4361ee;
  border-color: #3f37c9;
  color: #fff;
}

.tab.active .tab-ico {
  color: #fff;
}

.page-title {
  margin: 59px 0 53px 6px;
  display: flex;
  align-items: center;
}

.title-text {
  margin-left: 24px;
  padding-bottom: 3px;
  font-size: 33px;
  color: #6c757d;
}

.title-count {
  margin-left: 20px;
  padding-bottom: 2px;
  font-size: 30px;
  color: #868e96;
}

.table {
  width: 2500px;
  border: 2px solid #ddd;
  border-bottom: none;
  border-radius: 12px 0 0 0;
}

.thead {
  background: #f0f0f2;
  height: 167px;
  border-bottom: 2px solid #ddd;
  box-sizing: content-box;
}

.grid {
  display: grid;
  grid-template-columns: 243px 444px 444px 243px 244px 244px 245px 244px;
}

.filters {
  padding-top: 16px;
  height: 52px;
}

.filter {
  display: block;
  width: 196px;
  height: 52px;
  margin-left: 1px;
  background: #fff;
  border-radius: 8px;
}

.labels {
  padding-top: 33px;
  font-size: 30px;
  line-height: 42px;
  color: #4a5588;
}

.cell {
  padding: 0 21px 0 25px;
  min-width: 0;
  overflow: hidden;
  white-space: nowrap;
  text-overflow: ellipsis;
}

.row {
  height: 98px;
  box-sizing: border-box;
  padding-bottom: 2px;
  align-items: center;
  font-size: 30px;
  border-bottom: 2px solid #f0f0f0;
  background: #fff;
}

.row:nth-child(even) {
  background: #fbfbfb;
}

.ref {
  color: #0a1172;
}

.badge {
  display: inline-block;
  height: 59px;
  box-sizing: border-box;
  padding: 0 18px;
  line-height: 50px;
  font-size: 23px;
  font-weight: 700;
  color: #4b32c3;
  background: #eef1fd;
  border: 2px solid #e3e8f3;
  border-radius: 30px;
  vertical-align: middle;
}

.more {
  margin-left: 3px;
  font-size: 23px;
  color: #4b5563;
  vertical-align: middle;
}

.skill {
  display: flex;
  align-items: center;
  gap: 18px;
}

.cost {
  color: #00695c;
}
</style>
